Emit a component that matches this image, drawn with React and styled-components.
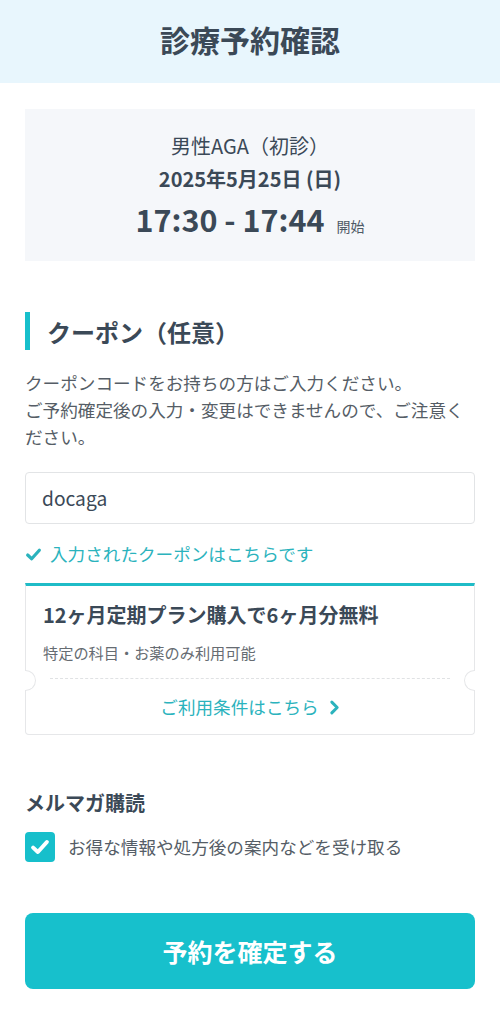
import React, { useState } from "react";
import styled, { createGlobalStyle } from "styled-components";

const GlobalStyle = createGlobalStyle`
  body {
    margin: 0;
    background: #ffffff;
    font-family: "Noto Sans CJK JP", "Noto Sans", sans-serif;
    color: #3b4957;
  }
  * { box-sizing: border-box; }
`;

const Page = styled.div`
  width: 500px;
  min-height: 1024px;
  background: #fff;
`;

const Header = styled.header`
  height: 83px;
  background: #e8f6fd;
  display: flex;
  align-items: center;
  justify-content: center;
  padding-bottom: 6px;
`;

const Title = styled.h1`
  margin: 0;
  font-size: 30px;
  line-height: 40px;
  font-weight: 700;
  color: #3b4957;
`;

const Main = styled.main`
  padding: 0 25px;
  display: flex;
  flex-direction: column;
`;

const Summary = styled.section`
  margin-top: 26px;
  height: 152px;
  background: #f5f7fa;
  padding-top: 23px;
  display: flex;
  flex-direction: column;
  align-items: center;
  text-align: center;
`;

const Menu = styled.div`
  font-size: 20px;
  line-height: 28px;
  color: #3b4957;
`;

const DateText = styled.div`
  margin-top: 5px;
  font-size: 20px;
  line-height: 28px;
  font-weight: 700;
`;

const TimeRow = styled.div`
  margin-top: 6px;
  height: 40px;
  display: flex;
  align-items: baseline;
  gap: 12px;
`;

const Time = styled.span`
  font-size: 30.5px;
  line-height: 40px;
  font-weight: 700;
`;

const Start = styled.span`
  font-size: 14px;
  line-height: 20px;
  color: #4e5a66;
`;

const SectionHeading = styled.h2`
  margin: 51px 0 0;
  height: 38px;
  border-left: 5px solid #17bfcb;
  padding-left: 17px;
  display: flex;
  align-items: center;
  font-size: 24px;
  font-weight: 700;
`;

const Desc = styled.p`
  margin: 19px 0 0;
  font-size: 17.6px;
  line-height: 27px;
  color: #555d66;
`;

const Input = styled.input`
  margin-top: 22px;
  height: 52px;
  width: 100%;
  border: 1px solid #e2e4e6;
  border-radius: 4px;
  padding: 0 16px;
  font-family: "Noto Sans CJK JP", "Noto Sans", sans-serif;
  font-size: 19.2px;
  color: #3b4957;
  outline: none;
`;

const Applied = styled.div`
  margin-top: 18px;
  display: flex;
  align-items: center;
  gap: 8px;
  font-size: 17.6px;
  line-height: 24px;
  color: #2bb3bd;
`;

const Coupon = styled.div`
  position: relative;
  margin-top: 17px;
  border: 1px solid #e6e7e9;
  border-top: 3px solid #1fbcc7;
  border-radius: 0 0 4px 4px;
  padding: 16px 17px 15px;
`;

const CouponTitle = styled.div`
  font-size: 20px;
  line-height: 26px;
  font-weight: 700;
`;

const CouponSub = styled.div`
  margin-top: 14px;
  font-size: 15.2px;
  line-height: 20px;
  color: #666c72;
`;

const Perforation = styled.div`
  margin: 16px 7px 0;
  border-top: 1px dashed #e0e2e4;
`;

const Notch = styled.span`
  position: absolute;
  top: 84px;
  width: 11px;
  height: 21px;
  background: #fff;
  border: 1px solid #e6e7e9;
  ${(p) =>
    p.side === "left"
      ? `left: -1px; border-left: none; border-radius: 0 11px 11px 0;`
      : `right: -1px; border-right: none; border-radius: 11px 0 0 11px;`}
`;

const TermsLink = styled.a`
  margin-top: 16px;
  display: flex;
  align-items: center;
  justify-content: center;
  gap: 10px;
  font-size: 17.6px;
  line-height: 24px;
  color: #2bb3bd;
  text-decoration: none;
`;

const SubHeading = styled.h3`
  margin: 55px 0 0;
  font-size: 20px;
  line-height: 26px;
  font-weight: 700;
`;

const CheckRow = styled.label`
  margin-top: 16px;
  height: 30px;
  display: flex;
  align-items: center;
  gap: 13px;
  font-size: 17.6px;
  line-height: 24px;
  color: #555d66;
`;

const Box = styled.span`
  width: 30px;
  height: 30px;
  border-radius: 4px;
  background: ${(p) => (p.checked ? "#17bfcb" : "#fff")};
  border: ${(p) => (p.checked ? "none" : "1px solid #ccc")};
  display: flex;
  align-items: center;
  justify-content: center;
  flex-shrink: 0;
`;

const Submit = styled.button`
  margin-top: 51px;
  height: 76px;
  width: 100%;
  border: none;
  border-radius: 8px;
  background: #17c0cc;
  color: #fff;
  font-family: "Noto Sans CJK JP", "Noto Sans", sans-serif;
  font-size: 25px;
  font-weight: 700;
`;

const Check = ({ size = 16, color = "#2bb3bd", width = 3 }) => (
  <svg width={size} height={size} viewBox="0 0 16 16" fill="none">
    <polyline points="2.5,8.5 6.3,12 13.5,4" stroke={color} strokeWidth={width} strokeLinecap="round" strokeLinejoin="round" />
  </svg>
);

const Chevron = () => (
  <svg width="11" height="15" viewBox="0 0 10 14" fill="none">
    <polyline points="2.5,2 7.5,7 2.5,12" stroke="#2bb3bd" strokeWidth="2.8" strokeLinecap="round" strokeLinejoin="round" />
  </svg>
);

export default function App() {
  const [code, setCode] = useState("docaga");
  const [subscribe, setSubscribe] = useState(true);

  return (
    <Page>
      <GlobalStyle />
      <Header>
        <Title>診療予約確認</Title>
      </Header>
      <Main>
        <Summary>
          <Menu>男性AGA（初診）</Menu>
          <DateText>2025年5月25日 (日)</DateText>
          <TimeRow>
            <Time>17:30 - 17:44</Time>
            <Start>開始</Start>
          </TimeRow>
        </Summary>

        <SectionHeading>クーポン（任意）</SectionHeading>
        <Desc>
          クーポンコードをお持ちの方はご入力ください。
          <br />
          ご予約確定後の入力・変更はできませんので、ご注意ください。
        </Desc>
        <Input value={code} onChange={(e) => setCode(e.target.value)} />
        <Applied>
          <Check size={17} />
          入力されたクーポンはこちらです
        </Applied>

        <Coupon>
          <CouponTitle>12ヶ月定期プラン購入で6ヶ月分無料</CouponTitle>
          <CouponSub>特定の科目・お薬のみ利用可能</CouponSub>
          <Perforation />
          <Notch side="left" />
          <Notch side="right" />
          <TermsLink href="#">
            ご利用条件はこちら
            <Chevron />
          </TermsLink>
        </Coupon>

        <SubHeading>メルマガ購読</SubHeading>
        <CheckRow onClick={() => setSubscribe(!subscribe)}>
          <Box checked={subscribe}>{subscribe && <Check size={20} color="#fff" width={3.2} />}</Box>
          お得な情報や処方後の案内などを受け取る
        </CheckRow>

        <Submit>予約を確定する</Submit>
      </Main>
    </Page>
  );
}
